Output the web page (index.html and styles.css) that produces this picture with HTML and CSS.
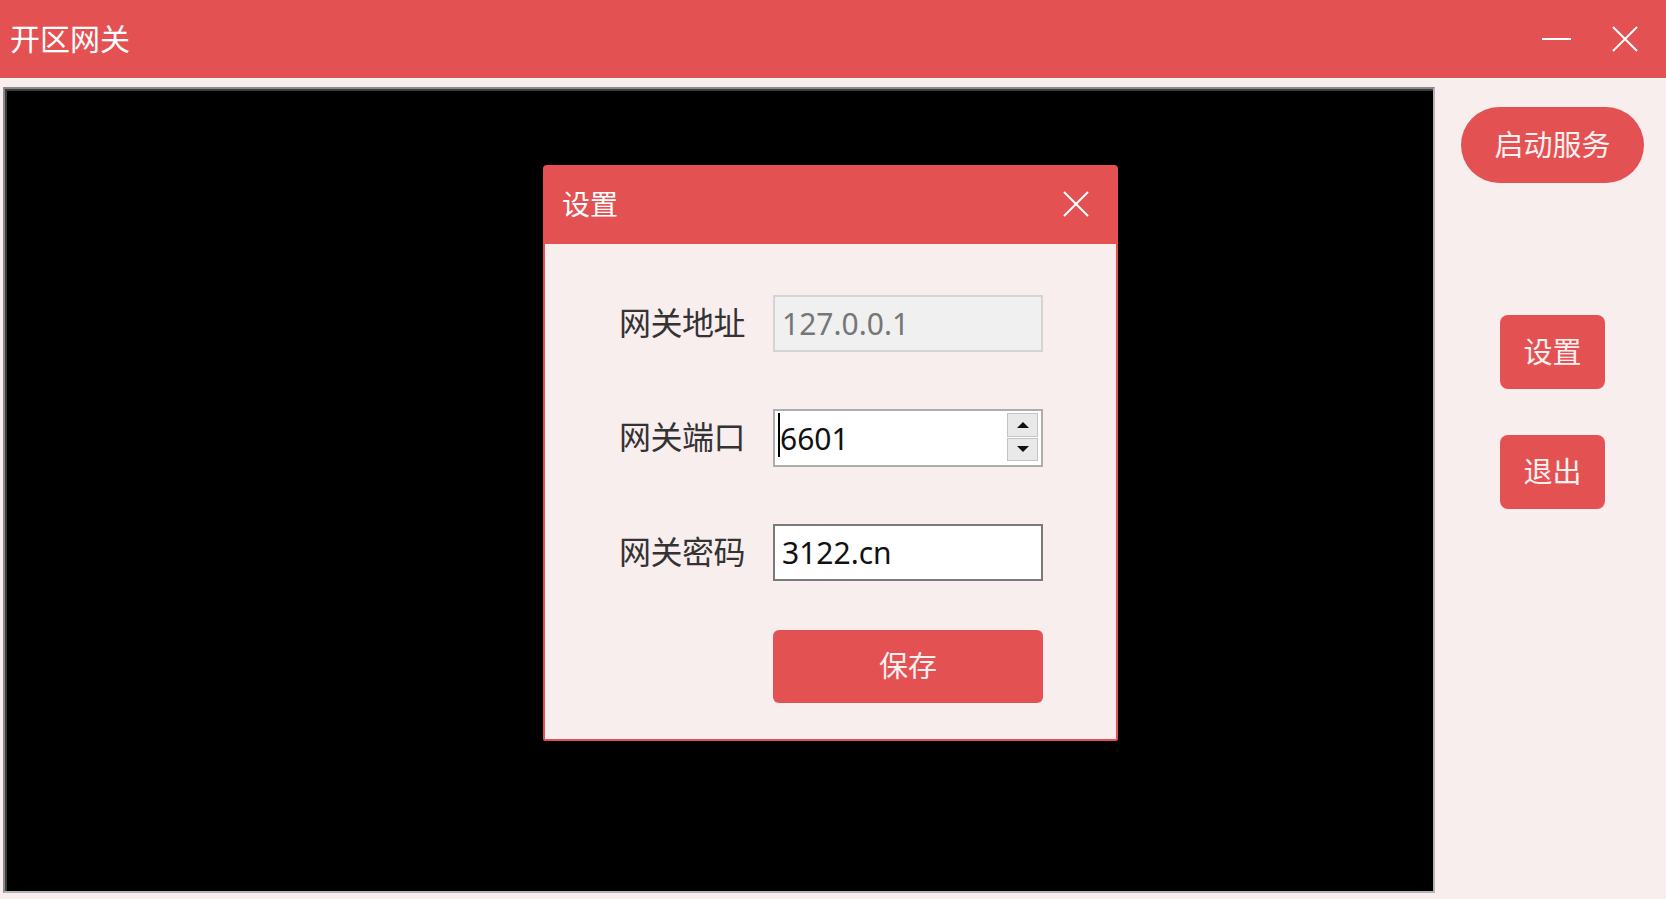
FILE: index.html
```html
<!DOCTYPE html>
<html lang="zh-CN">
<head>
    <meta charset="UTF-8">
    <meta name="viewport" content="width=device-width, initial-scale=1.0">
    <title>开区网关</title>
    <link rel="stylesheet" href="styles.css">
</head>
<body>
    <div class="window">
        <header class="titlebar">
            <h1>开区网关</h1>
            <div class="win-controls">
                <button class="win-btn" title="最小化">
                    <svg width="29" height="26" viewBox="0 0 29 26"><line x1="0" y1="13" x2="29" y2="13" stroke="#fff" stroke-width="2"/></svg>
                </button>
                <button class="win-btn" title="关闭">
                    <svg width="26" height="26" viewBox="0 0 26 26"><path d="M1 1 L25 25 M25 1 L1 25" stroke="#fff" stroke-width="2" fill="none"/></svg>
                </button>
            </div>
        </header>

        <main class="content">
            <div class="screen"></div>
            <aside class="sidebar">
                <button class="pill-btn">启动服务</button>
                <button class="side-btn side-first">设置</button>
                <button class="side-btn">退出</button>
            </aside>
        </main>

        <!-- settings dialog -->
        <div class="dialog">
            <div class="dialog-header">
                <h2>设置</h2>
                <button class="dialog-close" title="关闭">
                    <svg width="26" height="26" viewBox="0 0 26 26"><path d="M1 1 L25 25 M25 1 L1 25" stroke="#fff" stroke-width="2" fill="none"/></svg>
                </button>
            </div>
            <div class="dialog-body">
                <div class="form-grid">
                    <label class="form-label">网关地址</label>
                    <input class="field field-disabled" type="text" value="127.0.0.1" disabled>

                    <label class="form-label">网关端口</label>
                    <div class="field-spin">
                        <input class="spin-input" type="text" value="6601">
                        <div class="spin">
                            <span class="spin-btn"><span class="arrow-up"></span></span>
                            <span class="spin-btn"><span class="arrow-down"></span></span>
                        </div>
                    </div>

                    <label class="form-label">网关密码</label>
                    <input class="field field-dark" type="text" value="3122.cn">
                </div>
                <button class="save-btn">保存</button>
            </div>
        </div>
    </div>
</body>
</html>
```

FILE: styles.css
```css
* {
    margin: 0;
    padding: 0;
    box-sizing: border-box;
    font-family: 'Noto Sans', 'Noto Sans CJK SC', sans-serif;
}

body {
    width: 1666px;
    height: 899px;
    overflow: hidden;
    background-color: #f9eeee;
}

button {
    border: none;
    cursor: pointer;
}

.window {
    position: relative;
    display: flex;
    flex-direction: column;
    height: 899px;
}

/* title bar */
.titlebar {
    height: 78px;
    flex-shrink: 0;
    display: flex;
    align-items: center;
    padding-left: 10px;
    background-color: #e45152;
}

.titlebar h1 {
    font-size: 30px;
    font-weight: normal;
    color: #fff;
    line-height: 1;
}

.win-controls {
    margin-left: auto;
    display: flex;
    align-items: center;
    gap: 41px;
    padding-right: 28px;
}

.win-btn {
    background: none;
    display: flex;
}

/* main area */
.content {
    flex: 1;
    display: flex;
    border-top: 1px solid #fdf8f8;
}

.screen {
    width: 1432px;
    margin: 8px 0 6px 3px;
    background-color: #000;
    border: 2px solid;
    border-color: #8a8a8a #b4b4b4 #b4b4b4 #8a8a8a;
    box-shadow: inset 2px 2px 0 #3c3c3c;
}

.sidebar {
    flex: 1;
    display: flex;
    flex-direction: column;
    align-items: center;
    padding-top: 28px;
    padding-left: 4px;
}

.pill-btn {
    width: 183px;
    height: 76px;
    border-radius: 38px;
    background-color: #e45152;
    color: #fdf0f0;
    font-size: 29px;
    padding-bottom: 4px;
}

.side-btn {
    width: 105px;
    height: 74px;
    border-radius: 8px;
    background-color: #e45152;
    color: #fdf0f0;
    font-size: 29px;
    padding-bottom: 5px;
    margin-top: 46px;
}

.side-first {
    margin-top: 132px;
}

/* dialog */
.dialog {
    position: absolute;
    left: 543px;
    top: 165px;
    width: 575px;
    height: 576px;
    border: 2px solid #e45152;
    border-radius: 4px 4px 2px 2px;
    background-color: #f9eeee;
    box-shadow: 0 0 6px rgba(0, 0, 0, 0.3);
}

.dialog-header {
    height: 77px;
    display: flex;
    align-items: center;
    padding: 0 27px 3px 17px;
    background-color: #e45152;
}

.dialog-header h2 {
    font-size: 28px;
    font-weight: normal;
    color: #fff;
    line-height: 1;
}

.dialog-close {
    margin-left: auto;
    background: none;
    display: flex;
}

.dialog-body {
    padding: 51px 0 0 74px;
}

.form-grid {
    display: grid;
    grid-template-columns: 128px 270px;
    column-gap: 26px;
    row-gap: 57px;
    align-items: center;
}

.form-label {
    font-size: 32px;
    color: #333;
    line-height: 1;
    letter-spacing: -0.5px;
    padding-bottom: 2px;
}

.field {
    width: 270px;
    height: 57px;
    border: 2px solid #adadad;
    background-color: #fff;
    padding-left: 7px;
    font-size: 30px;
    color: #111;
    outline: none;
}

.field-disabled {
    background-color: #f0f0f0;
    border-color: #d4d4d4;
    color: #767676;
}

.field-dark {
    border-color: #7a7a7a;
}

.field-spin {
    position: relative;
    width: 270px;
    height: 58px;
    display: flex;
    border: 2px solid #adadad;
    background-color: #fff;
}

.field-spin::before {
    content: "";
    position: absolute;
    left: 3px;
    top: 2px;
    width: 2px;
    height: 44px;
    background-color: #000;
}

.spin-input {
    flex: 1;
    min-width: 0;
    border: none;
    padding-left: 5px;
    font-size: 30px;
    color: #111;
    background: transparent;
    outline: none;
}

.spin {
    width: 31px;
    margin: 2px 3px 4px 0;
    display: flex;
    flex-direction: column;
    gap: 1px;
}

.spin-btn {
    flex: 1;
    display: flex;
    align-items: center;
    justify-content: center;
    background-color: #e9e9e9;
    border: 1px solid #c3c3c3;
}

.arrow-up {
    border-left: 6px solid transparent;
    border-right: 6px solid transparent;
    border-bottom: 6px solid #111;
}

.arrow-down {
    border-left: 6px solid transparent;
    border-right: 6px solid transparent;
    border-top: 6px solid #111;
}

.save-btn {
    display: block;
    width: 270px;
    height: 73px;
    margin: 49px 0 0 154px;
    border-radius: 6px;
    background-color: #e45152;
    color: #fdf0f0;
    font-size: 29px;
    padding-bottom: 6px;
}
```
